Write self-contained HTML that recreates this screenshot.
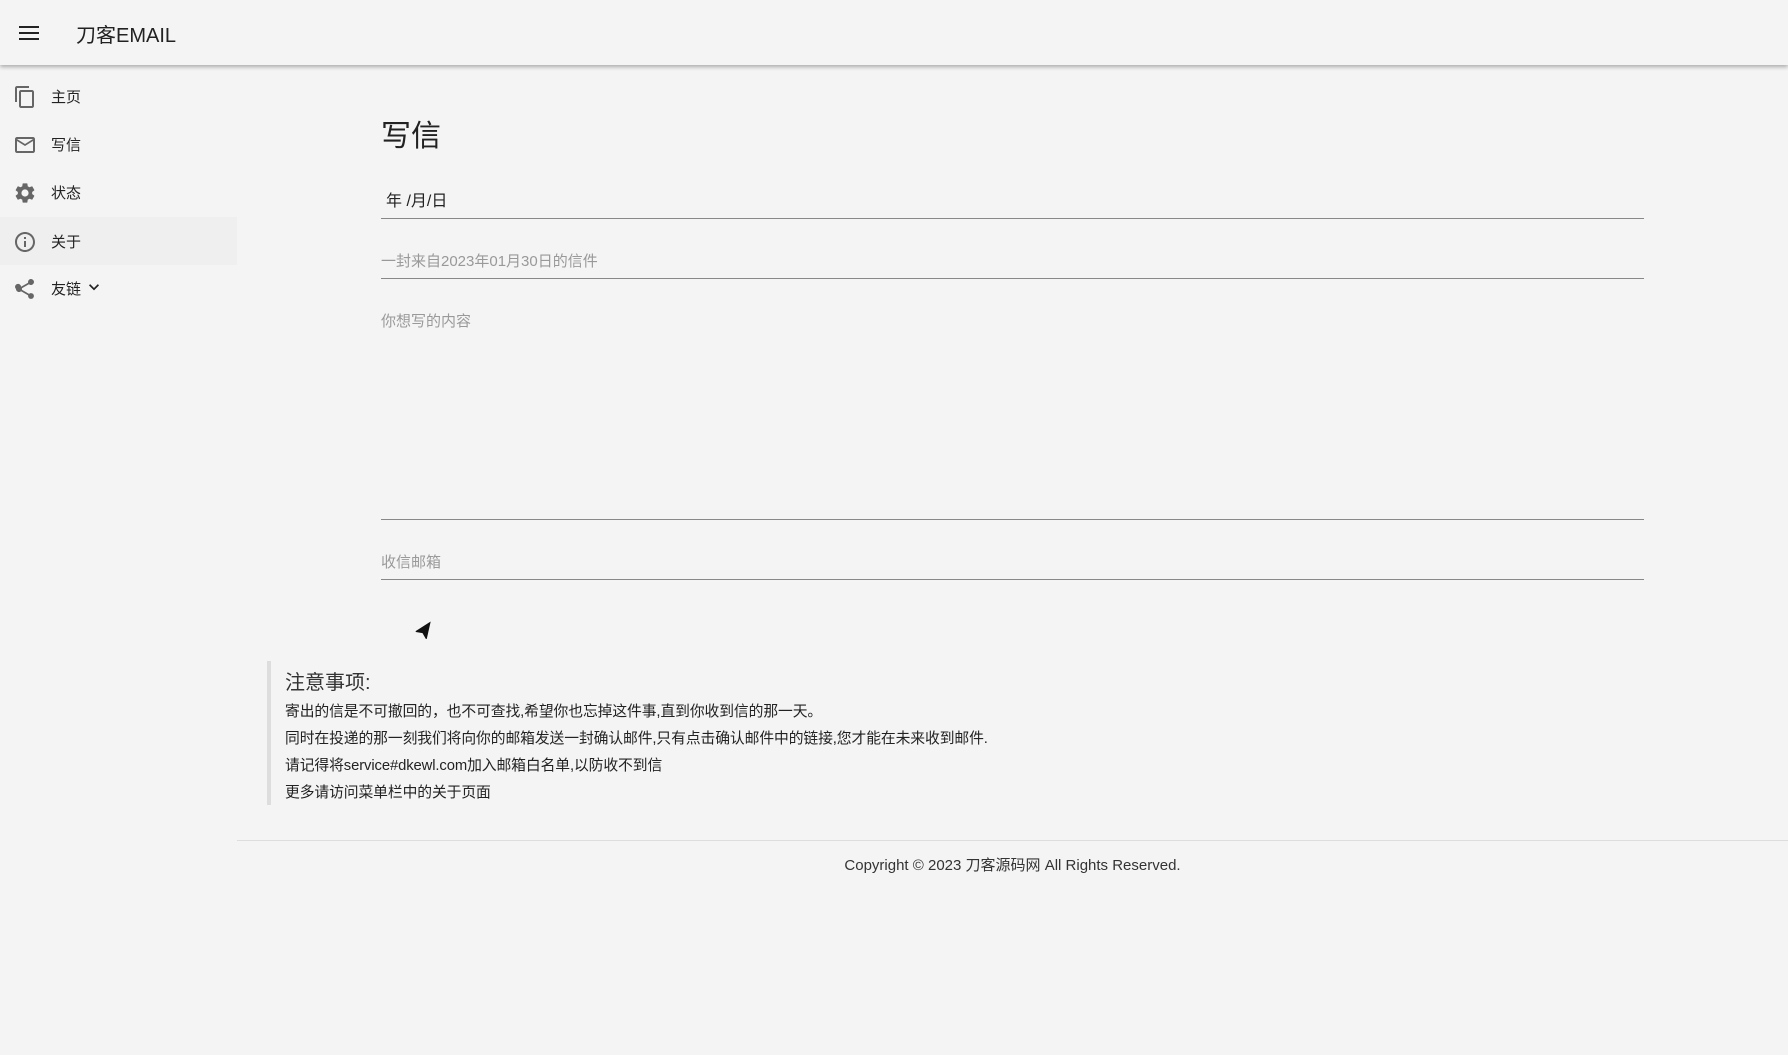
<!DOCTYPE html>
<html><head><meta charset="utf-8"><style>
*{margin:0;padding:0;box-sizing:border-box}
body{width:1788px;height:1055px;background:#f4f4f4;font-family:"Liberation Sans","Noto Sans CJK SC",sans-serif;color:#222;position:relative;overflow:hidden}
.hdr{position:absolute;left:0;top:0;width:1788px;height:65px;background:#f4f4f4;box-shadow:0 2px 4px rgba(0,0,0,.3)}
.hdr .t{position:absolute;left:76px;top:19px;font-size:20px;color:#222}
.it{position:absolute;left:0;width:237px;height:48px}
.it svg{position:absolute;left:13px;top:13px}
.it span{position:absolute;left:51px;top:14px;font-size:15px;color:#222}
.line{position:absolute;left:381px;width:1263px;height:1px;background:#888}
.ph{position:absolute;left:381px;font-size:15px;color:#999}
.note p{position:absolute;left:285px;font-size:14.8px;color:#222;letter-spacing:-0.1px}
</style></head><body>
<div class="hdr">
<svg style="position:absolute;left:19px;top:25px" width="20" height="16" viewBox="0 0 20 16"><rect y="1" width="20" height="2" fill="#222"/><rect y="7" width="20" height="2" fill="#222"/><rect y="13" width="20" height="2" fill="#222"/></svg>
<div class="t">刀客EMAIL</div></div>
<div class="it" style="top:72px"><svg width="24" height="24" viewBox="0 0 24 24"><path d="M16 1H4c-1.1 0-2 .9-2 2v14h2V3h12V1zm3 4H8c-1.1 0-2 .9-2 2v14c0 1.1.9 2 2 2h11c1.1 0 2-.9 2-2V7c0-1.1-.9-2-2-2zm0 16H8V7h11v14z" fill="#666"/></svg><span>主页</span></div>
<div class="it" style="top:120px"><svg width="24" height="24" viewBox="0 0 24 24"><path d="M20 4H4c-1.1 0-2 .9-2 2v12c0 1.1.9 2 2 2h16c1.1 0 2-.9 2-2V6c0-1.1-.9-2-2-2zm0 14H4V8l8 5 8-5v10zm-8-7L4 6h16l-8 5z" fill="#666"/></svg><span>写信</span></div>
<div class="it" style="top:168px"><svg width="24" height="24" viewBox="0 0 24 24"><path d="M19.14 12.94c.04-.3.06-.61.06-.94 0-.32-.02-.64-.07-.94l2.03-1.58a.49.49 0 00.12-.61l-1.920-3.32a.49.49 0 00-.59-.22l-2.39.96c-.5-.38-1.03-.7-1.62-.94l-.36-2.54a.48.48 0 00-.48-.41h-3.84c-.24 0-.43.17-.47.41l-.36 2.54c-.59.24-1.13.57-1.62.94l-2.39-.96a.48.48 0 00-.59.22L2.74 8.87c-.12.21-.08.47.12.61l2.03 1.58c-.05.3-.09.63-.09.94s.02.64.07.94l-2.03 1.58a.49.49 0 00-.12.61l1.92 3.32c.12.22.37.29.59.22l2.39-.96c.5.38 1.03.7 1.62.94l.36 2.54c.05.24.24.41.48.41h3.84c.24 0 .44-.17.47-.41l.36-2.54c.59-.24 1.13-.56 1.62-.94l2.39.96c.22.08.47 0 .59-.22l1.92-3.32c.12-.22.07-.47-.12-.61l-2.01-1.58zM12 15.6A3.6 3.6 0 1112 8.4a3.6 3.6 0 010 7.2z" fill="#666"/></svg><span>状态</span></div>
<div class="it" style="top:217px;background:#efefef"><svg width="24" height="24" viewBox="0 0 24 24"><path d="M11 7h2v2h-2zm0 4h2v6h-2zm1-9C6.48 2 2 6.48 2 12s4.48 10 10 10 10-4.48 10-10S17.52 2 12 2zm0 18c-4.41 0-8-3.590-8-8s3.59-8 8-8 8 3.59 8 8-3.59 8-8 8z" fill="#666"/></svg><span>关于</span></div>
<div class="it" style="top:264px"><svg width="24" height="24" viewBox="0 0 24 24"><path d="M18 16.08c-.76 0-1.44.3-1.96.77L8.91 12.7c.05-.23.09-.46.09-.7s-.04-.47-.09-.7l7.05-4.11A2.99 2.99 0 1015 5c0 .24.04.47.09.7L8.04 9.81A2.99 2.99 0 103 12a2.99 2.99 0 005.04 2.19l7.12 4.16c-.05.21-.08.43-.08.65A2.92 2.92 0 1018 16.08z" fill="#666"/></svg><span>友链</span><svg style="left:84px;top:13px" width="20" height="20" viewBox="0 0 24 24"><path d="M7.41 8.59L12 13.17l4.59-4.58L18 10l-6 6-6-6z" fill="#222"/></svg></div>
<div style="position:absolute;left:381px;top:111px;font-size:30px;color:#222">写信</div>
<div style="position:absolute;left:386px;top:187px;font-size:16px;color:#222">年 /月/日</div>
<div class="line" style="top:218px"></div>
<div class="ph" style="top:250px">一封来自2023年01月30日的信件</div>
<div class="line" style="top:278px"></div>
<div class="ph" style="top:310px">你想写的内容</div>
<div class="line" style="top:519px"></div>
<div class="ph" style="top:551px">收信邮箱</div>
<div class="line" style="top:579px"></div>
<svg style="position:absolute;left:413px;top:620px" width="22" height="22" viewBox="0 0 24 24"><path d="M21 3L3 10.5v1l7 2.5 2.5 7h1z" fill="#111" transform="rotate(-10 12 12)"/></svg>
<div style="position:absolute;left:267px;top:661px;width:4px;height:144px;background:#ddd"></div>
<div class="note">
<div style="position:absolute;left:285px;top:666px;font-size:20px;color:#333">注意事项:</div>
<p style="top:700px">寄出的信是不可撤回的，也不可查找,希望你也忘掉这件事,直到你收到信的那一天。</p>
<p style="top:727px">同时在投递的那一刻我们将向你的邮箱发送一封确认邮件,只有点击确认邮件中的链接,您才能在未来收到邮件.</p>
<p style="top:754px">请记得将service#dkewl.com加入邮箱白名单,以防收不到信</p>
<p style="top:781px">更多请访问菜单栏中的关于页面</p>
</div>
<div style="position:absolute;left:237px;top:840px;width:1551px;height:1px;background:#ddd"></div>
<div style="position:absolute;left:237px;width:1551px;top:854px;text-align:center;font-size:15px;color:#333">Copyright © 2023 刀客源码网 All Rights Reserved.</div>
</body></html>
